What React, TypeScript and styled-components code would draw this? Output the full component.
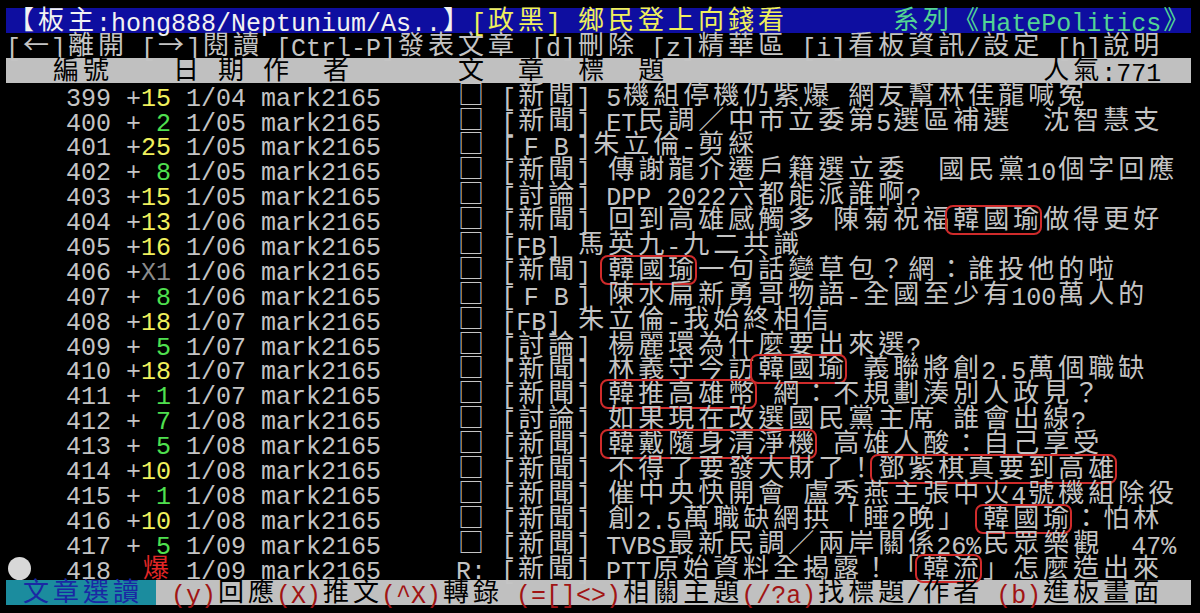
import React from 'react';
import styled, { createGlobalStyle, css } from 'styled-components';

const COL = 15;
const ROW = 24.9;
const WIDTH = 79 * COL;

const MONO = '"Liberation Mono", "DejaVu Sans Mono", monospace';
const CJK = '"Noto Sans CJK TC", "Noto Sans CJK JP", sans-serif';

const colors = {
  fg: '#c4c4c4',
  white: '#f2f2f2',
  yellow: '#f0f05c',
  green: '#4fe04f',
  red: '#e22626',
  dim: '#8c8c8c',
  ink: '#000000',
  blue: '#0e0ea0',
  gray: '#c0c0c0',
  teal: '#1b8c9e',
  navy: '#1a28a4',
  maroon: '#a01414',
  series: '#52d494',
  pen: '#cf2b2b',
  dot: '#d8d8d8',
};

type Seg = { t: string; c?: string; bg?: string; boxed?: boolean; dot?: boolean };

const GlobalStyle = createGlobalStyle`
  html, body {
    margin: 0;
    padding: 0;
    background: #000;
  }
  #root {
    min-height: 613px;
    background: #000;
  }
`;

const Terminal = styled.div`
  padding: 8px 0 0 6px;
  font-family: ${MONO};
  font-size: 25px;
  color: ${colors.fg};
  background: #000;
  height: 605px;
  overflow: hidden;
`;

const Row = styled.div<{ $bg?: string }>`
  display: flex;
  align-items: baseline;
  height: ${ROW}px;
  ${(p) =>
    p.$bg &&
    css`
      width: ${WIDTH}px;
      background: ${p.$bg};
    `}
`;

const Chunk = styled.span<{ $fg?: string; $bg?: string; $boxed?: boolean }>`
  display: block;
  flex: none;
  position: relative;
  height: ${ROW}px;
  line-height: ${ROW}px;
  white-space: pre;
  color: ${(p) => p.$fg ?? 'inherit'};
  background: ${(p) => p.$bg ?? 'transparent'};
  ${(p) =>
    p.$boxed &&
    css`
      &::after {
        content: '';
        position: absolute;
        left: -6px;
        right: -1px;
        top: -2px;
        bottom: -3px;
        border: 2px solid ${colors.pen};
        border-radius: 8px;
      }
    `}
`;

const Wide = styled.span<{ $latin?: boolean }>`
  display: inline-block;
  position: relative;
  top: ${(p) => (p.$latin ? 0 : -2)}px;
  width: ${COL * 2}px;
  text-align: center;
  font-family: ${(p) => (p.$latin ? MONO : CJK)};
  font-size: ${(p) => (p.$latin ? 25 : 26)}px;
  line-height: ${ROW}px;
  vertical-align: baseline;
`;

const Cursor = styled.span`
  display: block;
  flex: none;
  align-self: flex-start;
  position: relative;
  width: ${COL * 2}px;
  height: ${ROW}px;

  &::before {
    content: '';
    position: absolute;
    left: 2px;
    top: 1px;
    width: 23px;
    height: 23px;
    border-radius: 50%;
    background: ${colors.dot};
  }
`;

function Glyphs({ text }: { text: string }) {
  const out: React.ReactNode[] = [];
  let run = '';
  const flush = () => {
    if (run) out.push(run);
    run = '';
  };
  for (const ch of Array.from(text)) {
    const code = ch.charCodeAt(0);
    if (code < 0x80) {
      run += ch;
      continue;
    }
    flush();
    if (code >= 0xff21 && code <= 0xff5a) {
      out.push(
        <Wide key={out.length} $latin>
          {String.fromCharCode(code - 0xfee0)}
        </Wide>
      );
    } else {
      out.push(<Wide key={out.length}>{ch}</Wide>);
    }
  }
  flush();
  return <>{out}</>;
}

function Line({ segs, bg }: { segs: Seg[]; bg?: string }) {
  return (
    <Row $bg={bg}>
      {segs.map((s, i) =>
        s.dot ? (
          <Cursor key={i} />
        ) : (
          <Chunk key={i} $fg={s.c} $bg={s.bg} $boxed={s.boxed}>
            <Glyphs text={s.t} />
          </Chunk>
        )
      )}
    </Row>
  );
}

// {…} marks the words circled in red on the screenshot
function titleSegs(title: string): Seg[] {
  return title
    .split(/(\{[^}]*\})/)
    .filter(Boolean)
    .map((part) =>
      part.startsWith('{') ? { t: part.slice(1, -1), boxed: true } : { t: part }
    );
}

type Post = {
  n: number;
  push: string;
  date: string;
  title: string;
  reply?: boolean;
  current?: boolean;
};

const posts: Post[] = [
  { n: 399, push: '15', date: '1/04', title: '[新聞] 5機組停機仍紫爆 網友幫林佳龍喊冤' },
  { n: 400, push: ' 2', date: '1/05', title: '[新聞] ET民調／中市立委第5選區補選  沈智慧支' },
  { n: 401, push: '25', date: '1/05', title: '[ＦＢ]朱立倫-剪綵' },
  { n: 402, push: ' 8', date: '1/05', title: '[新聞] 傳謝龍介遷戶籍選立委  國民黨10個字回應' },
  { n: 403, push: '15', date: '1/05', title: '[討論] DPP 2022六都能派誰啊?' },
  { n: 404, push: '13', date: '1/06', title: '[新聞] 回到高雄感觸多 陳菊祝福{韓國瑜}做得更好' },
  { n: 405, push: '16', date: '1/06', title: '[FB] 馬英九-九二共識' },
  { n: 406, push: 'X1', date: '1/06', title: '[新聞] {韓國瑜}一句話變草包？網：誰投他的啦' },
  { n: 407, push: ' 8', date: '1/06', title: '[ＦＢ] 陳水扁新勇哥物語-全國至少有100萬人的' },
  { n: 408, push: '18', date: '1/07', title: '[FB] 朱立倫-我始終相信' },
  { n: 409, push: ' 5', date: '1/07', title: '[討論] 楊麗環為什麼要出來選?' },
  { n: 410, push: '18', date: '1/07', title: '[新聞] 林義守今訪{韓國瑜} 義聯將創2.5萬個職缺' },
  { n: 411, push: ' 1', date: '1/07', title: '[新聞] {韓推高雄幣} 網：不規劃湊別人政見？' },
  { n: 412, push: ' 7', date: '1/08', title: '[討論] 如果現在改選國民黨主席 誰會出線?' },
  { n: 413, push: ' 5', date: '1/08', title: '[新聞] {韓戴隨身清淨機} 高雄人酸：自己享受' },
  { n: 414, push: '10', date: '1/08', title: '[新聞] 不得了要發大財了！{鄧紫棋真要到高雄}' },
  { n: 415, push: ' 1', date: '1/08', title: '[新聞] 催中央快開會 盧秀燕主張中火4號機組除役' },
  { n: 416, push: '10', date: '1/08', title: '[新聞] 創2.5萬職缺網拱「睡2晚」 {韓國瑜}：怕林' },
  { n: 417, push: ' 5', date: '1/09', title: '[新聞] TVBS最新民調／兩岸關係26%民眾樂觀  47%' },
  { n: 418, push: '爆', date: '1/09', title: '[新聞] PTT原始資料全揭露！「{韓流}」怎麼造出來', reply: true, current: true },
];

function pushSeg(push: string): Seg {
  if (push === '爆') return { t: push, c: colors.red };
  if (push.startsWith('X')) return { t: push, c: colors.dim };
  const n = parseInt(push, 10);
  return { t: push, c: n >= 10 ? colors.yellow : colors.green };
}

function postSegs(p: Post): Seg[] {
  return [
    p.current ? { t: '', dot: true } : { t: '  ' },
    { t: `${String(p.n).padStart(5)} ${p.push === '爆' ? ' ' : '+'}` },
    pushSeg(p.push),
    { t: ` ${p.date} ${'mark2165'.padEnd(12)} ${p.reply ? 'R:' : '□'} ` },
    ...titleSegs(p.title),
  ];
}

const titleBar: Seg[] = [
  { t: '【板主:hong888/Neptunium/As..】', c: colors.white },
  { t: '[政黑] 鄉民登上向錢看', c: colors.yellow },
  { t: '       ' },
  { t: '系列《HatePolitics》', c: colors.series },
];

const helpBar: Seg[] = [
  { t: '[←]離開 [→]閱讀 [Ctrl-P]發表文章 [d]刪除 [z]精華區 [i]看板資訊/設定 [h]說明' },
];

const headBar: Seg[] = [
  {
    t: '   編號    日 期 作  者       文  章  標  題                         人氣:771  ',
    c: colors.ink,
  },
];

const footBar: Seg[] = [
  { t: ' 文章選讀 ', c: colors.navy, bg: colors.teal },
  { t: ' ', c: colors.ink },
  { t: '(y)', c: colors.maroon },
  { t: '回應', c: colors.ink },
  { t: '(X)', c: colors.maroon },
  { t: '推文', c: colors.ink },
  { t: '(^X)', c: colors.maroon },
  { t: '轉錄 ', c: colors.ink },
  { t: '(=[]<>)', c: colors.maroon },
  { t: '相關主題', c: colors.ink },
  { t: '(/?a)', c: colors.maroon },
  { t: '找標題/作者 ', c: colors.ink },
  { t: '(b)', c: colors.maroon },
  { t: '進板畫面', c: colors.ink },
];

export default function App() {
  return (
    <>
      <GlobalStyle />
      <Terminal>
        <Line segs={titleBar} bg={colors.blue} />
        <Line segs={helpBar} />
        <Line segs={headBar} bg={colors.gray} />
        {posts.map((p) => (
          <Line key={p.n} segs={postSegs(p)} />
        ))}
        <Line segs={footBar} bg={colors.gray} />
      </Terminal>
    </>
  );
}
